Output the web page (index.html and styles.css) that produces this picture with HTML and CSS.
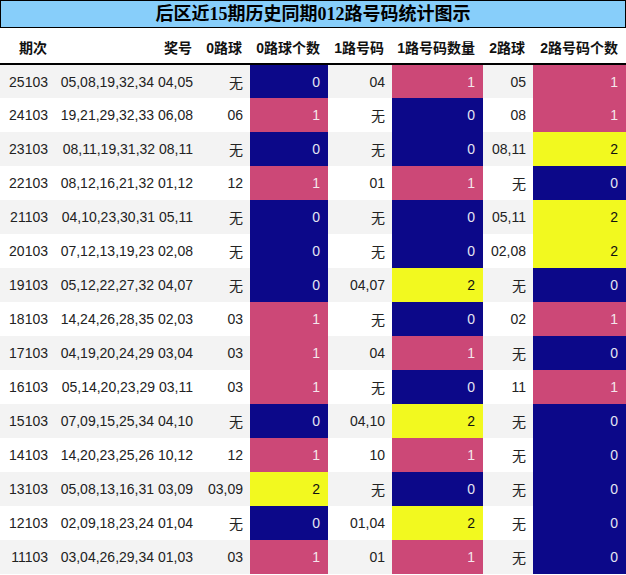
FILE: index.html
```html
<!DOCTYPE html>
<html lang="zh">
<head>
<meta charset="utf-8">
<link rel="stylesheet" href="styles.css">
</head>
<body>
<div class="title">后区近15期历史同期012路号码统计图示</div>
<table class="grid">
<colgroup>
<col class="c1"><col class="c2"><col class="c3"><col class="c4"><col class="c5"><col class="c6"><col class="c7"><col class="c8">
</colgroup>
<thead>
<tr><th>期次</th><th>奖号</th><th>0路球</th><th>0路球个数</th><th>1路号码</th><th>1路号码数量</th><th>2路球</th><th>2路号码个数</th></tr>
</thead>
<tbody>
<tr><td>25103</td><td>05,08,19,32,34 04,05</td><td>无</td><td class="n0">0</td><td>04</td><td class="n1">1</td><td>05</td><td class="n1">1</td></tr>
<tr><td>24103</td><td>19,21,29,32,33 06,08</td><td>06</td><td class="n1">1</td><td>无</td><td class="n0">0</td><td>08</td><td class="n1">1</td></tr>
<tr><td>23103</td><td>08,11,19,31,32 08,11</td><td>无</td><td class="n0">0</td><td>无</td><td class="n0">0</td><td>08,11</td><td class="n2">2</td></tr>
<tr><td>22103</td><td>08,12,16,21,32 01,12</td><td>12</td><td class="n1">1</td><td>01</td><td class="n1">1</td><td>无</td><td class="n0">0</td></tr>
<tr><td>21103</td><td>04,10,23,30,31 05,11</td><td>无</td><td class="n0">0</td><td>无</td><td class="n0">0</td><td>05,11</td><td class="n2">2</td></tr>
<tr><td>20103</td><td>07,12,13,19,23 02,08</td><td>无</td><td class="n0">0</td><td>无</td><td class="n0">0</td><td>02,08</td><td class="n2">2</td></tr>
<tr><td>19103</td><td>05,12,22,27,32 04,07</td><td>无</td><td class="n0">0</td><td>04,07</td><td class="n2">2</td><td>无</td><td class="n0">0</td></tr>
<tr><td>18103</td><td>14,24,26,28,35 02,03</td><td>03</td><td class="n1">1</td><td>无</td><td class="n0">0</td><td>02</td><td class="n1">1</td></tr>
<tr><td>17103</td><td>04,19,20,24,29 03,04</td><td>03</td><td class="n1">1</td><td>04</td><td class="n1">1</td><td>无</td><td class="n0">0</td></tr>
<tr><td>16103</td><td>05,14,20,23,29 03,11</td><td>03</td><td class="n1">1</td><td>无</td><td class="n0">0</td><td>11</td><td class="n1">1</td></tr>
<tr><td>15103</td><td>07,09,15,25,34 04,10</td><td>无</td><td class="n0">0</td><td>04,10</td><td class="n2">2</td><td>无</td><td class="n0">0</td></tr>
<tr><td>14103</td><td>14,20,23,25,26 10,12</td><td>12</td><td class="n1">1</td><td>10</td><td class="n1">1</td><td>无</td><td class="n0">0</td></tr>
<tr><td>13103</td><td>05,08,13,16,31 03,09</td><td>03,09</td><td class="n2">2</td><td>无</td><td class="n0">0</td><td>无</td><td class="n0">0</td></tr>
<tr><td>12103</td><td>02,09,18,23,24 01,04</td><td>无</td><td class="n0">0</td><td>01,04</td><td class="n2">2</td><td>无</td><td class="n0">0</td></tr>
<tr><td>11103</td><td>03,04,26,29,34 01,03</td><td>03</td><td class="n1">1</td><td>01</td><td class="n1">1</td><td>无</td><td class="n0">0</td></tr>
</tbody>
</table>
</body>
</html>
```
FILE: styles.css
```css
html, body {
  margin: 0;
  padding: 0;
  background: #fff;
}
body {
  width: 626px;
  font-family: "Liberation Sans", "Noto Sans CJK SC", sans-serif;
  color: #222;
}
.title {
  box-sizing: border-box;
  height: 28px;
  border: 1px solid #000;
  background: #87cefa;
  font-family: "Liberation Serif", "Noto Sans CJK SC", serif;
  font-weight: bold;
  font-size: 18px;
  line-height: 26px;
  text-align: center;
  color: #000;
}
.grid {
  width: 626px;
  border-collapse: collapse;
  table-layout: fixed;
  font-size: 14px;
}
.c1 { width: 55px; }
.c2 { width: 145px; }
.c3 { width: 50px; }
.c4 { width: 78px; }
.c5 { width: 64px; }
.c6 { width: 91px; }
.c7 { width: 50px; }
.c8 { width: 93px; }
.grid th {
  height: 36px;
  padding: 3px 8px 0 0;
  box-sizing: border-box;
  text-align: right;
  font-weight: bold;
  color: #111;
  border-bottom: 2px solid #000;
  white-space: nowrap;
  background: #fff;
}
.grid td {
  height: 34px;
  padding: 0 7px 0 0;
  box-sizing: border-box;
  text-align: right;
  white-space: nowrap;
}
.grid tbody tr:nth-child(odd) td { background: #f3f3f3; }
.grid tbody tr:nth-child(even) td { background: #fff; }
.grid tbody tr td.n0 { background: #0c0889; color: #e4e4f2; padding-right: 8px; }
.grid tbody tr td.n1 { background: #cc4877; color: #f4e6ec; padding-right: 8px; }
.grid tbody tr td.n2 { background: #f2f91f; color: #111; padding-right: 8px; }
```
